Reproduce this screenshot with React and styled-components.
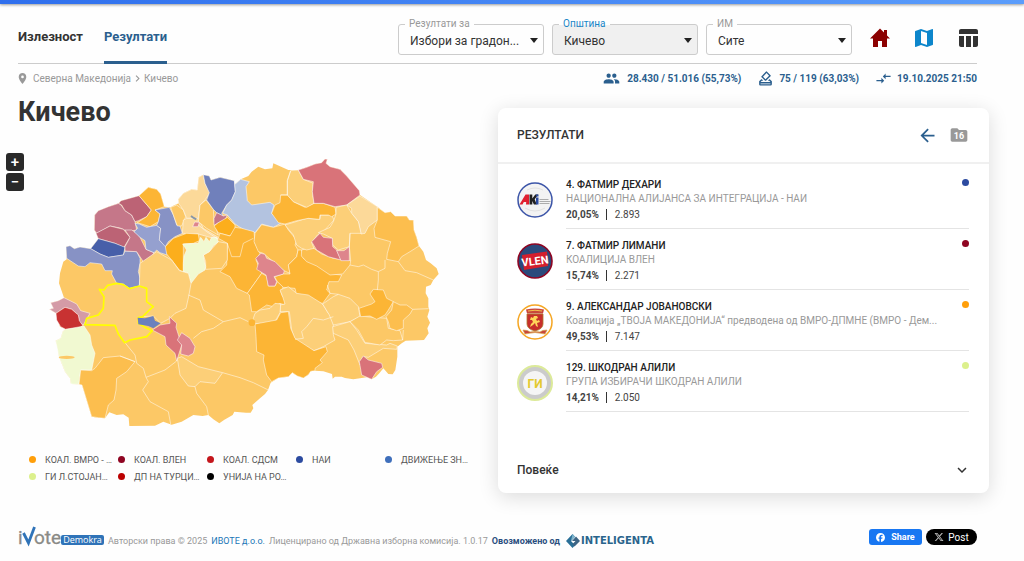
import { useState } from "react";
import styled, { createGlobalStyle } from "styled-components";
import {
  MdArrowBack,
  MdChevronRight,
  MdCompareArrows,
  MdExpandMore,
  MdFolder,
  MdLocationOn,
  MdMap,
  MdOutlineHowToVote,
  MdPeople,
  MdTableChart,
} from "react-icons/md";
import { FaFacebook, FaXTwitter } from "react-icons/fa6";

const GlobalStyle = createGlobalStyle`
  * {
    box-sizing: border-box;
  }

  body {
    margin: 0;
    background: #fefefe;
    color: #333;
    font-family: Roboto, "Noto Sans", sans-serif;
    font-size: 11px;
  }

  button, select {
    font-family: inherit;
  }

  a {
    color: inherit;
    text-decoration: none;
  }
`;

const TopBar = styled.div`
  height: 4px;
  background: linear-gradient(90deg, #2f6fed, #5b9dfb);
  box-shadow: 0 1px 3px rgba(0, 0, 0, 0.4);
`;

const Header = styled.header`
  display: flex;
  justify-content: space-between;
  height: 60px;
  margin: 0 47px 0 18px;
  border-bottom: 1px solid #ccc;
`;

const Nav = styled.nav`
  display: flex;
  gap: 21px;
`;

const NavLink = styled.a`
  height: 60px;
  padding-top: 5px;
  line-height: 56px;
  font-size: 13px;
  font-weight: 700;
  color: ${({ $active }) => ($active ? "#2b5f8e" : "#333")};
  border-bottom: 3px solid ${({ $active }) => ($active ? "#2b5f8e" : "transparent")};
`;

const Tools = styled.div`
  display: flex;
  align-items: flex-start;
  gap: 8px;
  margin-right: -3px;
  padding-top: 20px;
`;

const Field = styled.div`
  position: relative;
  width: 146px;

  &::after {
    content: "";
    position: absolute;
    top: 14px;
    right: 6px;
    border: 4px solid transparent;
    border-top: 5px solid #222;
    border-bottom: 0;
    pointer-events: none;
  }
`;

const FieldLabel = styled.label`
  position: absolute;
  top: -7px;
  left: 7px;
  padding: 0 4px;
  line-height: 13px;
  font-size: 10px;
  color: ${({ $active }) => ($active ? "#1a86c7" : "#999")};
  background: linear-gradient(#fefefe 60%, transparent 60%);
`;

const Select = styled.select`
  appearance: none;
  display: block;
  width: 100%;
  height: 31px;
  padding: 2px 20px 0 11px;
  font-size: 12px;
  color: #333;
  background: ${({ $active }) => ($active ? "#f0f0f0" : "#fefefe")};
  border: 1px solid #ccc;
  border-radius: 3px;
`;

const IconLinks = styled.div`
  display: flex;
  gap: 20px;
  margin-left: 8px;
  padding-top: 2px;
`;

const IconLink = styled.a`
  display: block;
  height: 24px;
  color: ${({ $color }) => $color};
  font-size: 24px;
`;

const SubHeader = styled.div`
  display: flex;
  align-items: center;
  justify-content: space-between;
  height: 28px;
  margin: 0 47px 0 16px;
`;

const Breadcrumb = styled.div`
  display: flex;
  align-items: center;
  font-size: 10px;
  color: #999;

  svg {
    font-size: 13px;
  }

  a {
    margin-left: 4px;
  }
`;

const Stats = styled.div`
  display: flex;
  gap: 16px;
`;

const Stat = styled.span`
  display: flex;
  align-items: center;
  gap: ${({ $gap = 5 }) => $gap}px;
  font-size: 10px;
  font-weight: 700;
  color: #2b5f8e;

  svg {
    font-size: 17px;
  }
`;

const Main = styled.main`
  display: grid;
  grid-template-columns: 498fr 491fr;
  margin-right: 35px;
`;

const MapColumn = styled.section`
  min-width: 0;
`;

const Title = styled.h1`
  margin: 0 0 18px 18px;
  line-height: 40px;
  font-size: 27px;
  font-weight: 700;
`;

const MapArea = styled.div`
  display: flex;
  align-items: flex-start;
  gap: 16px;
  padding: 0 48px 0 6px;
`;

const ZoomButtons = styled.div`
  display: grid;
  gap: 2px;
  padding-top: 3px;
`;

const ZoomButton = styled.button`
  width: 18px;
  height: 18px;
  padding: 0;
  line-height: 18px;
  font-size: 15px;
  font-weight: 500;
  color: #fff;
  background: #292929;
  border: 0;
  border-radius: 3px;
`;

const MapSvg = styled.svg`
  flex: 1;
  min-width: 0;
  display: block;
`;

const Legend = styled.ul`
  display: grid;
  grid-template-columns: repeat(5, 89px);
  margin: 21px 0 0 29px;
  padding: 0;
  list-style: none;
`;

const LegendItem = styled.li`
  display: flex;
  align-items: center;
  gap: 9px;
  height: 17px;
  font-size: 9px;
  color: #555;
  white-space: nowrap;
`;

const Dot = styled.span`
  flex: none;
  width: 7px;
  height: 7px;
  border-radius: 50%;
  background: ${({ $color }) => $color};
`;

const Card = styled.section`
  min-width: 0;
  margin-top: 16px;
  background: #fff;
  border-radius: 8px;
  box-shadow: 0 4px 20px rgba(0, 0, 0, 0.14);
`;

const CardHeader = styled.div`
  display: flex;
  align-items: center;
  height: 56px;
  padding: 0 20px 0 19px;
  border-bottom: 2px solid #f0f0f0;
`;

const CardTitle = styled.h2`
  flex: 1;
  margin: 0;
  font-size: 12px;
  font-weight: 500;
`;

const BackButton = styled.button`
  height: 22px;
  padding: 1px 0 0;
  color: #2b5f8e;
  font-size: 21px;
  line-height: 1;
  background: none;
  border: 0;
`;

const Folder = styled.span`
  position: relative;
  height: 20px;
  margin-left: 11px;
  font-size: 20px;
  color: #999;
`;

const FolderCount = styled.span`
  position: absolute;
  inset: 1px 0 0 0;
  text-align: center;
  line-height: 20px;
  font-size: 9px;
  font-weight: 700;
  color: #fff;
`;

const CandidateList = styled.ul`
  margin: 0;
  padding: 4px 20px 0 19px;
  list-style: none;
`;

const Candidate = styled.li`
  display: flex;
  align-items: center;
  gap: 13px;
`;

const Emblem = styled.svg`
  flex: none;
  width: 36px;
  height: 36px;
  margin-top: 3px;
`;

const CandidateBody = styled.div`
  flex: 1;
  min-width: 0;
  display: grid;
  grid-template-columns: 1fr auto;
  grid-template-rows: 14px 15px 16px;
  align-items: center;
  padding: 9px 0 6px;
  border-bottom: 1px solid #e4e4e4;

  ${Dot} {
    grid-row: 1;
    grid-column: 2;
    margin-bottom: 3px;
  }
`;

const CandidateName = styled.h3`
  margin: 0;
  font-size: 10px;
  font-weight: 500;
  color: #222;
`;

const CandidateParty = styled.p`
  grid-column: 1 / 3;
  margin: 0;
  font-size: 10px;
  color: #999;
  white-space: nowrap;
`;

const Votes = styled.div`
  display: flex;
  align-items: center;
  gap: 7px;
  font-size: 10px;
  color: #444;

  span {
    padding-left: 8px;
    border-left: 1px solid #333;
    line-height: 11px;
  }
`;

const MoreButton = styled.button`
  display: flex;
  align-items: center;
  justify-content: space-between;
  width: 100%;
  height: 46px;
  margin-top: 35px;
  padding: 0 18px 0 19px;
  font-size: 12px;
  font-weight: 500;
  color: #333;
  background: none;
  border: 0;

  svg {
    font-size: 18px;
  }
`;

const Footer = styled.footer`
  display: flex;
  align-items: center;
  margin: 32px 47px 0 18px;
  height: 24px;
  font-size: 9px;
  color: #999;
  white-space: nowrap;
`;

const Logo = styled.div`
  display: flex;
  align-items: flex-end;
  margin-right: 4px;
`;

const Copy = styled.p`
  flex: 1;
  display: flex;
  align-items: center;
  gap: 4px;
  margin: 0;
  padding-top: 7px;
`;

const FooterLink = styled.a`
  color: ${({ $dark }) => ($dark ? "#2b4f7e" : "#1a76b7")};
  font-weight: ${({ $dark }) => ($dark ? 700 : 400)};
`;

const Share = styled.div`
  display: flex;
  gap: 4px;
`;

const ShareButton = styled.button`
  display: flex;
  align-items: center;
  justify-content: center;
  gap: ${({ $gap }) => $gap}px;
  width: ${({ $width }) => $width}px;
  height: 16px;
  padding: 0;
  font-size: ${({ $size }) => $size}px;
  font-weight: ${({ $bold }) => ($bold ? 700 : 400)};
  color: #fff;
  background: ${({ $color }) => $color};
  border: 0;
  border-radius: ${({ $radius }) => $radius}px;
`;

const COUNTRY =
  "M78,290 90,287 103,296 120,291 152,296 175,266 168,248 163,240 164,195 175,182 205,170 236,160 243,152 297,137 325,112 350,118 362,132 373,170 392,172 398,168 416,160 415,148 430,130 455,118 472,120 474,98 476,82 490,74 508,78 513,90 540,82 583,92 586,102 602,88 625,78 635,65 655,50 675,58 697,55 700,40 745,60 775,60 800,52 825,42 845,38 855,27 862,28 858,40 870,50 900,58 920,78 958,122 960,135 1012,170 1035,188 1052,185 1065,198 1100,198 1108,210 1120,210 1122,240 1130,262 1137,288 1150,305 1158,330 1172,340 1190,355 1196,372 1180,390 1172,405 1158,410 1157,430 1165,445 1165,470 1168,480 1162,500 1170,518 1162,535 1166,550 1152,570 1097,572 1085,580 1072,590 1072,620 1066,660 1058,673 1045,672 1030,655 1018,670 1008,680 995,688 980,682 940,688 915,684 905,680 885,680 878,686 876,672 850,664 825,662 812,664 805,674 790,684 772,678 757,668 745,680 715,684 692,698 684,720 675,732 660,745 637,765 640,775 632,788 618,788 583,785 578,795 552,810 538,820 520,808 505,795 488,798 460,795 425,815 395,824 370,815 345,827 268,828 266,803 250,793 230,795 208,787 195,805 175,803 155,800 126,705 117,703 93,702 90,685 75,665 57,620 53,590 47,572 62,565 68,545 77,536 60,530 50,495 48,490 28,478 40,475 32,458 55,452 72,443 57,400 60,370 70,335 80,328Z";

// [fill, outline]
const REGIONS = [
  ["#c57789", "236,160 205,170 175,182 164,195 163,240 170,250 210,228 240,234 250,238 262,245 290,240 285,215 275,195 255,182 243,165"],
  ["#bc6375", "236,160 243,152 297,137 334,180 320,200 295,212 285,215 275,195 255,182 245,165"],
  ["#fcb535", "297,137 325,112 350,118 362,132 373,170 345,180 360,192 355,215 330,230 292,218 320,200 334,180"],
  ["#bc6375", "168,250 210,228 250,238 270,262 262,275 252,292 225,280 175,266"],
  ["#475fa9", "175,266 225,280 255,292 250,315 205,322 180,312 152,296"],
  ["#8792c5", "78,290 90,287 103,296 120,291 152,296 180,312 205,322 250,315 255,303 290,305 300,325 300,340 295,365 300,385 298,408 268,415 250,402 230,400 215,372 217,362 195,362 185,342 150,338 135,350 115,348 80,325"],
  ["#c57789", "255,240 270,262 255,290 255,303 290,305 312,338 335,322 342,308 318,298 300,262 290,250 275,240"],
  ["#95a0cf", "285,220 298,222 320,232 350,226 362,235 358,270 380,292 382,315 360,308 350,300 342,308 318,298 315,272 300,262 282,245 293,235"],
  ["#8792c5", "345,180 388,172 400,195 410,225 420,228 427,250 405,260 385,275 376,290 358,270 362,235 350,226 355,215 360,192"],
  ["#fcc866", "392,172 410,165 430,180 437,200 425,228 412,228 400,195"],
  ["#fcd999", "416,160 415,148 430,130 455,118 472,120 474,98 476,82 490,74 495,100 510,128 495,150 480,165 475,205 440,205 430,180"],
  ["#fcd999", "430,210 440,205 475,205 490,235 535,262 530,268 475,252 427,250"],
  ["#fcc866", "480,165 498,150 520,178 522,215 535,255 500,235 475,215"],
  ["#7080bb", "490,74 508,78 513,90 540,82 583,92 586,125 575,150 560,165 545,190 550,198 530,188 520,178 500,150 508,128 495,100"],
  ["#b3c3e0", "583,92 586,102 602,88 628,95 618,110 622,152 635,165 690,157 702,165 695,190 710,205 722,220 700,232 665,222 645,248 615,240 600,232 585,222 562,195 548,190 560,165 575,150 586,125"],
  ["#c57789", "530,188 550,198 562,195 555,210 535,218 522,226 522,205"],
  ["#fcae1c", "562,202 585,225 585,240 570,258 535,248 522,228 535,218"],
  ["#fcae1c", "376,290 400,265 440,250 475,252 478,272 460,280 430,282 430,365 418,360 395,330 380,312"],
  ["#fcb535", "585,232 605,235 642,245 645,280 660,310 648,330 665,370 622,430 590,415 570,380 540,365 560,345 562,280 535,265 540,250 570,258"],
  ["#fcc866", "535,275 562,280 562,330 545,355 497,358 497,335 490,315 508,305"],
  ["#f1f9d1", "428,282 475,280 482,262 492,275 498,262 508,275 515,262 530,262 535,275 520,288 508,305 490,315 497,350 495,360 475,372 453,400 445,370 430,365 430,340 432,318 440,300"],
  ["#fcbe4e", "645,250 665,224 700,232 735,222 745,240 770,270 765,285 774,300 770,320 745,345 750,370 732,362 670,310 655,305 642,275"],
  ["#fcb535", "665,370 680,378 685,408 705,408 712,395 730,410 722,425 728,440 738,450 735,465 720,460 700,470 680,465 650,485 635,485 628,435 622,430"],
  ["#fcb535", "730,372 750,372 745,345 770,320 774,300 785,300 790,325 830,345 870,372 905,375 895,395 867,395 860,420 870,430 848,460 820,458 795,445 770,435 765,415 730,412 712,395 704,380"],
  ["#de858c", "663,310 675,313 680,325 705,335 733,363 730,372 702,380 710,395 705,408 685,408 678,375 650,358 655,340 647,325"],
  ["#fcbe4e", "785,300 815,290 845,312 880,325 932,332 930,345 908,372 870,375 830,348 800,335 784,318"],
  ["#fccf78", "735,225 800,205 840,208 842,195 875,195 882,210 850,245 832,255 815,278 822,295 800,300 785,295 770,285 760,255"],
  ["#fcb535", "722,135 743,135 760,155 795,172 822,160 850,160 885,172 888,192 875,200 865,195 840,195 838,208 805,205 770,212 735,222 715,218 695,190 705,165 720,158"],
  ["#fccf78", "742,92 752,62 775,60 790,88 820,100 817,125 822,160 800,172 760,155 742,135"],
  ["#d97379", "775,60 800,52 825,42 845,38 855,27 862,28 858,40 870,50 900,58 920,78 958,122 960,135 920,165 885,170 850,160 822,160 817,125 820,95 790,88"],
  ["#fcd999", "920,165 960,138 1012,170 1012,210 985,230 975,250 963,252 955,215 935,190 935,175"],
  ["#fccf78", "888,172 920,165 935,190 955,215 963,250 930,250 928,290 895,300 878,285 877,265 850,252 835,248 870,232 880,215 888,192"],
  ["#d97379", "815,275 840,250 850,262 877,265 878,290 890,300 903,330 865,320 830,300"],
  ["#de858c", "890,302 912,302 928,290 928,332 903,332"],
  ["#fcbe4e", "1012,172 1035,188 1052,185 1065,198 1100,198 1108,210 1120,210 1122,240 1130,262 1137,288 1110,305 1085,320 1075,335 1040,328 1042,310 1052,275 1005,262 1002,235 1012,210"],
  ["#fccf78", "720,420 745,410 770,430 805,435 848,462 865,490 880,500 880,555 885,570 850,590 822,602 790,590 765,568 755,540 748,485 720,485 720,465 735,462 728,440"],
  ["#fccf78", "848,462 880,440 895,433 930,445 955,470 960,500 930,515 880,525 868,495"],
  ["#fccf78", "645,490 660,480 690,475 705,460 722,462 720,488 705,515 665,522 645,520 640,505"],
  ["#fccf78", "878,530 930,515 950,540 975,580 1040,585 1050,580 1072,588 1070,598 1030,595 985,622 970,620 960,645 942,600 925,570 880,550"],
  ["#fcc866", "930,515 960,498 1000,502 1040,505 1045,535 1080,542 1088,570 1060,572 1040,570 1020,585 975,577 955,540"],
  ["#fcb535", "957,475 995,462 1005,455 990,432 1000,418 1030,420 1040,445 1060,455 1045,480 1035,495 1010,508 990,498 962,500"],
  ["#fcbe4e", "1060,455 1080,465 1100,465 1118,478 1110,492 1090,510 1090,535 1070,542 1050,535 1045,515 1038,500 1055,480"],
  ["#fcb535", "645,522 710,510 722,488 745,485 752,535 765,565 822,602 858,590 862,605 840,630 847,638 825,655 825,662 812,664 805,674 790,684 772,678 757,668 745,680 715,684 695,695 680,675 670,630 672,615 650,605 648,560"],
  ["#d97379", "970,618 985,630 1025,640 1028,652 1010,665 995,688 965,675 958,635"],
  ["#d49ba6", "32,458 55,452 72,443 110,462 122,482 150,490 138,510 130,525 118,515 115,495 95,478 75,472 48,490 28,478 40,475"],
  ["#c83232", "48,490 75,472 95,478 115,495 118,512 128,526 118,535 77,538 62,530 50,510"],
  ["#f1f9d1", "77,538 132,528 150,555 155,585 165,610 155,660 122,660 117,703 93,702 90,685 75,665 57,620 47,572 62,565 68,545"],
  ["#fcbe4e", "122,660 155,662 165,655 190,623 240,618 285,635 260,665 230,685 228,720 222,750 205,765 195,805 175,803 155,800 126,705 117,703"],
  ["#fccf78", "300,340 350,305 395,330 418,362 445,370 453,400 447,435 438,475 405,490 390,505 362,520 340,498 308,500 340,470 320,455 320,415 298,408"],
  ["#d97379", "337,540 360,525 390,520 388,500 410,520 408,532 420,570 425,585 410,633 405,610 378,585 375,560"],
  ["#de858c", "412,570 425,548 450,565 465,590 460,610 445,618 422,612 425,585"],
  ["#fccf78", "412,625 425,620 475,650 548,668 525,700 480,695 465,710 445,708 420,675"],
  ["#de858c", "458,230 464,216 478,217 474,230"],
];

const SELECTED =
  "178,418 192,420 203,406 230,400 250,404 268,416 298,408 320,415 320,455 340,470 328,480 308,500 295,503 295,520 320,535 337,542 320,560 270,570 254,578 235,552 225,526 135,524 140,505 175,495 190,475 192,440 182,425";

const BORDERS = [
  "752,62 742,92 742,135 722,135",
  "1035,330 1035,355 1015,365 995,358 970,345 955,350 930,345",
  "930,250 928,290 932,332",
  "1075,335 1095,362 1130,368 1180,390",
  "1015,365 1015,390 1012,420",
  "862,405 870,430 895,433",
  "765,568 790,565 785,545 800,530 820,505 850,510 880,500",
  "1118,478 1166,476",
  "1090,540 1088,570",
  "562,280 575,320 600,320 610,280 640,265",
  "445,435 480,450 490,480 550,515 520,535 485,545 460,565",
  "550,515 600,503 625,515",
  "255,578 285,615 290,640 310,655 318,682 375,660 410,633",
  "318,682 325,695 308,720 330,755 385,785 392,822",
  "465,710 470,730 500,770 505,795",
  "548,668 600,683 640,698 685,720",
  "285,635 240,618",
  "475,225 500,245 535,268",
];

const LEGEND = [
  { label: "КОАЛ. ВМРО - …", color: "#ff9f0a" },
  { label: "КОАЛ. ВЛЕН", color: "#8f0522" },
  { label: "КОАЛ. СДСМ", color: "#c4161c" },
  { label: "НАИ", color: "#2c4ba0" },
  { label: "ДВИЖЕЊЕ ЗН…", color: "#3f6fbb" },
  { label: "ГИ Л.СТОЈАН…", color: "#dcf08c" },
  { label: "ДП НА ТУРЦИ…", color: "#bb0000" },
  { label: "УНИЈА НА РО…", color: "#000" },
];

const CANDIDATES = [
  {
    name: "4. ФАТМИР ДЕХАРИ",
    party: "НАЦИОНАЛНА АЛИЈАНСА ЗА ИНТЕГРАЦИЈА - НАИ",
    percent: "20,05%",
    votes: "2.893",
    color: "#2c4ba0",
    Mark: NaiMark,
  },
  {
    name: "7. ФАТМИР ЛИМАНИ",
    party: "КОАЛИЦИЈА ВЛЕН",
    percent: "15,74%",
    votes: "2.271",
    color: "#8f0522",
    Mark: VlenMark,
  },
  {
    name: "9. АЛЕКСАНДАР ЈОВАНОВСКИ",
    party: "Коалиција „ТВОЈА МАКЕДОНИЈА“ предводена од ВМРО-ДПМНЕ (ВМРО - Дем...",
    percent: "49,53%",
    votes: "7.147",
    color: "#ff9f0a",
    Mark: VmroMark,
  },
  {
    name: "129. ШКОДРАН АЛИЛИ",
    party: "ГРУПА ИЗБИРАЧИ ШКОДРАН АЛИЛИ",
    percent: "14,21%",
    votes: "2.050",
    color: "#dcf08c",
    Mark: GroupMark,
  },
];

function NaiMark() {
  return (
    <>
      <circle cx="18" cy="18" r="17" fill="#f3f3f3" stroke="#3c55a8" strokeWidth="1.5" />
      <path d="M10 8q8-4 16 0M8 26q10 6 20 0" stroke="#e2e2e2" fill="none" />
      <path d="M2.500 22.500 8.500 12.500h3.500v10H9l.2-2.500H6.800L5.500 22.500z" fill="#e02030" />
      <path d="M12.500 12.500h2.800v4l3-4h3l-3.600 4.700 2 5.300h-2.800l-1.600-3.500v3.500h-2.800z" fill="#222" />
      <path d="M19 15.500h2.500v7H19zM19 12.500h2.500v2H19z" fill="#2c4ba0" />
      <path d="M22.500 17.500h9M22.500 19.500h11M22.500 21.500h10" stroke="#999" strokeWidth="0.8" />
    </>
  );
}

function VlenMark() {
  return (
    <>
      <circle cx="18" cy="18" r="17" fill="#2a4a7c" stroke="#8f0522" strokeWidth="1.6" />
      <path d="M5 12 30 8.500 31 23 7 27z" fill="#d31f2d" />
      <text x="18" y="22" textAnchor="middle" fontSize="11" fontWeight="700" fill="#fff" transform="rotate(-7 18 18)">
        VLEN
      </text>
    </>
  );
}

function VmroMark() {
  return (
    <>
      <circle cx="18" cy="18" r="17" fill="#fff" stroke="#f5a623" strokeWidth="1.5" />
      <path d="M9 5.500q9-2 18 0l-1 4H10z" fill="#c9463b" />
      <path d="M11 7q7-1.500 14 0" stroke="#f3c14b" fill="none" />
      <path d="M10 10h16v10q0 5-8 7-8-2-8-7z" fill="#c72f2b" stroke="#ad7a2c" strokeWidth="0.8" />
      <path
        d="M14 13l2 1 1-2 3 0 1 2-2 1 1 2 2-1 1 2-3 1 1 4-2-1-1-3-2 2-3 2 1-3 2-2-1-2-2 0z"
        fill="#ffd65a"
      />
      <path d="M6 26q5 0 7 2 5-1 10 0 2-2 7-2l-2 4q-10-3-20 0z" fill="#c9463b" stroke="#d7a243" strokeWidth="0.7" />
    </>
  );
}

function GroupMark() {
  return (
    <>
      <circle cx="18" cy="18" r="17" fill="#cbcbcb" stroke="#dcea9a" strokeWidth="2" />
      <circle cx="18" cy="18" r="12" fill="#f5f5f5" />
      <text x="18" y="22.500" textAnchor="middle" fontSize="12" fontWeight="700" fill="#e3c92f">
        ГИ
      </text>
    </>
  );
}

function HomeIcon() {
  return (
    <svg width="24" height="24" viewBox="0 0 24 24" fill="currentColor">
      <path d="M12 2.500 2 12.500h3V21h5v-6h4v6h5v-8.500h3L19 9.500V4h-3v2.500z" />
    </svg>
  );
}

function CountryMap() {
  return (
    <MapSvg viewBox="0 0 1230 840" role="img" aria-label="Карта на општини">
      <path d={COUNTRY} fill="#fcc866" />
      <g stroke="#fff" strokeOpacity="0.5" strokeWidth="3" strokeLinejoin="round">
        {REGIONS.map(([fill, points]) => (
          <polygon key={points} points={points} fill={fill} />
        ))}
        {BORDERS.map((points) => (
          <polyline key={points} points={points} fill="none" />
        ))}
      </g>
      <circle cx="636" cy="518" r="10" fill="#fcb535" />
      <ellipse cx="80" cy="622" rx="24" ry="5" fill="#fcc866" />
      <path d="M453 198l8 6 8 4" stroke="#8896a8" strokeWidth="6" fill="none" />
      <polygon points={SELECTED} fill="#fccf78" stroke="#ff0" strokeWidth="5" strokeLinejoin="round" />
      <polygon points="293,503 315,505 340,498 345,512 362,520 340,535 325,528 295,523" fill="#6b80bd" />
    </MapSvg>
  );
}

function VoteLogo() {
  return (
    <Logo>
      <svg width="86" height="24" viewBox="0 0 86 24" role="img" aria-label="iVote Demokra">
        <g fontSize="19" fill="#8a8a86" stroke="#8a8a86" strokeWidth="0.3">
          <text x="0" y="19">
            i
          </text>
          <text x="16" y="19">
            ote
          </text>
        </g>
        <path d="M5.500 8 10.500 18 16.500 2" fill="none" stroke="#2f73b8" strokeWidth="2.800" />
        <rect x="43" y="10" width="43" height="10" rx="2" fill="#2f73b8" />
        <text x="64.500" y="18" textAnchor="middle" fontFamily="'Open Sans', sans-serif" fontSize="9" fill="#fff">
          Demokra
        </text>
      </svg>
    </Logo>
  );
}

function InteligentaLogo() {
  return (
    <svg width="92" height="18" viewBox="0 0 92 18" role="img" aria-label="Inteligenta">
      <path d="M8.500 2 2 9l6.500 7 2.500-2.700L7 9l4-4.300z" fill="#2a6f97" />
      <path d="M8 9l4-4.500L16 9l-5.500 5.500L8.500 12 11.500 9z" fill="#3d6585" />
      <path d="M8.500 2l2.500 2.700L7 9z" fill="#7db4cc" />
      <text x="17" y="12" fontFamily="'DejaVu Sans', sans-serif" fontWeight="700" fontSize="10" fill="#2a648c">
        INTELIGENTA
      </text>
    </svg>
  );
}

function FilterField({ id, label, value, active }) {
  return (
    <Field>
      <Select id={id} $active={active} defaultValue={value}>
        <option>{value}</option>
      </Select>
      <FieldLabel htmlFor={id} $active={active}>
        {label}
      </FieldLabel>
    </Field>
  );
}

function App() {
  const [expanded, setExpanded] = useState(false);

  return (
    <>
      <GlobalStyle />
      <TopBar />
      <Header>
        <Nav>
          <NavLink href="#turnout">Излезност</NavLink>
          <NavLink href="#results" $active>
            Резултати
          </NavLink>
        </Nav>
        <Tools>
          <FilterField id="election" label="Резултати за" value="Избори за градон..." />
          <FilterField id="municipality" label="Општина" value="Кичево" active />
          <FilterField id="station" label="ИМ" value="Сите" />
          <IconLinks>
            <IconLink href="#home" $color="#8b0000" aria-label="Почетна">
              <HomeIcon />
            </IconLink>
            <IconLink href="#map" $color="#0d86cb" aria-label="Карта">
              <MdMap />
            </IconLink>
            <IconLink href="#table" $color="#333" aria-label="Табела">
              <MdTableChart />
            </IconLink>
          </IconLinks>
        </Tools>
      </Header>

      <SubHeader>
        <Breadcrumb>
          <MdLocationOn />
          <a href="#country">Северна Македонија</a>
          <MdChevronRight />
          <span>Кичево</span>
        </Breadcrumb>
        <Stats>
          <Stat $gap={7}>
            <MdPeople />
            28.430 / 51.016 (55,73%)
          </Stat>
          <Stat>
            <MdOutlineHowToVote />
            75 / 119 (63,03%)
          </Stat>
          <Stat>
            <MdCompareArrows />
            19.10.2025 21:50
          </Stat>
        </Stats>
      </SubHeader>

      <Main>
        <MapColumn>
          <Title>Кичево</Title>
          <MapArea>
            <ZoomButtons>
              <ZoomButton aria-label="Зголеми">+</ZoomButton>
              <ZoomButton aria-label="Намали">−</ZoomButton>
            </ZoomButtons>
            <CountryMap />
          </MapArea>
          <Legend>
            {LEGEND.map(({ label, color }) => (
              <LegendItem key={label}>
                <Dot $color={color} />
                {label}
              </LegendItem>
            ))}
          </Legend>
        </MapColumn>

        <Card>
          <CardHeader>
            <CardTitle>РЕЗУЛТАТИ</CardTitle>
            <BackButton aria-label="Назад">
              <MdArrowBack />
            </BackButton>
            <Folder>
              <MdFolder />
              <FolderCount>16</FolderCount>
            </Folder>
          </CardHeader>
          <CandidateList>
            {CANDIDATES.map(({ name, party, percent, votes, color, Mark }) => (
              <Candidate key={name}>
                <Emblem viewBox="0 0 36 36">
                  <Mark />
                </Emblem>
                <CandidateBody>
                  <CandidateName>{name}</CandidateName>
                  <Dot $color={color} />
                  <CandidateParty>{party}</CandidateParty>
                  <Votes>
                    <b>{percent}</b>
                    <span>{votes}</span>
                  </Votes>
                </CandidateBody>
              </Candidate>
            ))}
          </CandidateList>
          <MoreButton aria-expanded={expanded} onClick={() => setExpanded(!expanded)}>
            Повеќе
            <MdExpandMore />
          </MoreButton>
        </Card>
      </Main>

      <Footer>
        <VoteLogo />
        <Copy>
          <span>Авторски права © 2025</span>
          <FooterLink href="#ivote">ИВОТЕ д.о.о.</FooterLink>
          <span>Лиценцирано од Државна изборна комисија. 1.0.17</span>
          <FooterLink href="#powered" $dark>
            Овозможено од
          </FooterLink>
          <InteligentaLogo />
        </Copy>
        <Share>
          <ShareButton $width={53} $size={9} $gap={6} $bold $color="#1877f2" $radius={3}>
            <FaFacebook />
            Share
          </ShareButton>
          <ShareButton $width={51} $size={10} $gap={4} $color="#000" $radius={8}>
            <FaXTwitter color="#bbb" />
            Post
          </ShareButton>
        </Share>
      </Footer>
    </>
  );
}

export default App;
